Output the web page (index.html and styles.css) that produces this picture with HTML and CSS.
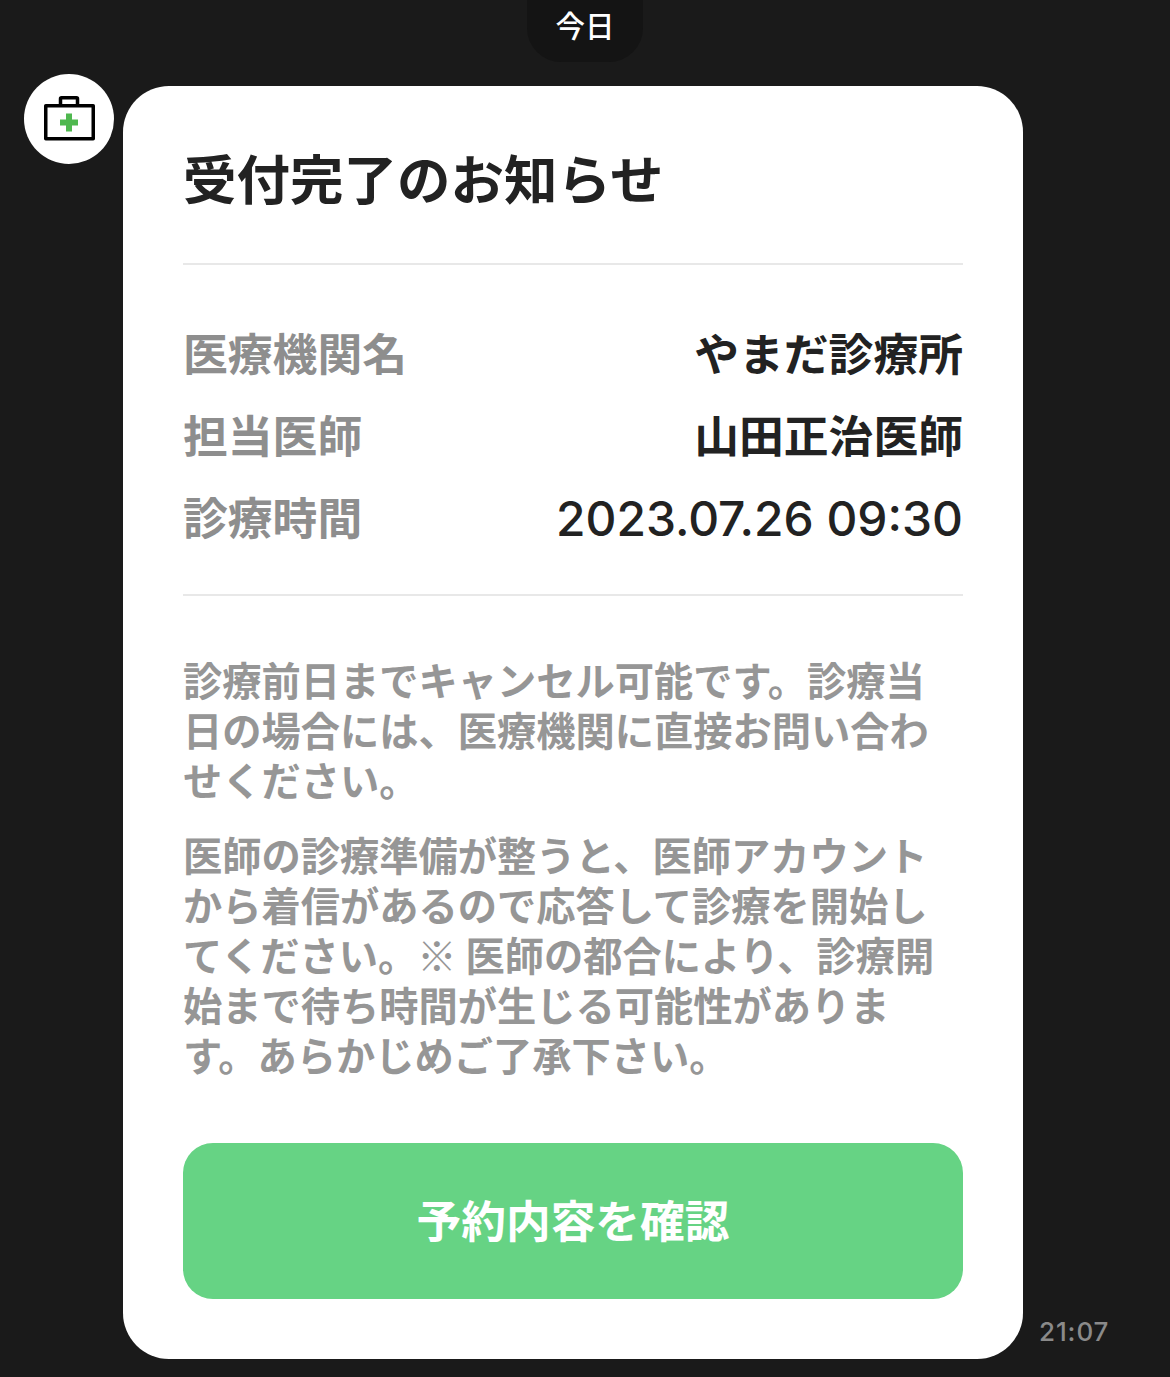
FILE: index.html
```html
<!DOCTYPE html>
<html lang="ja">

<head>
    <meta charset="UTF-8">
    <meta name="viewport" content="width=device-width, initial-scale=1.0">
    <title>受付完了のお知らせ</title>
    <link rel="stylesheet" href="styles.css">
</head>

<body>
    <div class="date-row">
        <div class="date-pill">今日</div>
    </div>
    <div class="message">
        <div class="avatar">
            <svg class="avatar-icon" viewBox="0 0 52 45" width="52" height="45" aria-hidden="true">
                <path d="M17.5 9V2.8a1 1 0 0 1 1-1h15a1 1 0 0 1 1 1V9" fill="none" stroke="#000" stroke-width="3.5"/>
                <rect x="2.75" y="9.75" width="47.5" height="33" fill="#fff" stroke="#000" stroke-width="3.5" stroke-linejoin="round"/>
                <path d="M23 17.5h6v6h6v6h-6v6h-6v-6h-6v-6h6z" fill="#4fb84f"/>
            </svg>
        </div>
        <div class="card">
            <h2>受付完了のお知らせ</h2>
            <hr>
            <dl class="details">
                <div class="row">
                    <dt>医療機関名</dt>
                    <dd>やまだ診療所</dd>
                </div>
                <div class="row">
                    <dt>担当医師</dt>
                    <dd>山田正治医師</dd>
                </div>
                <div class="row">
                    <dt>診療時間</dt>
                    <dd class="latin">2023.07.26 09:30</dd>
                </div>
            </dl>
            <hr>
            <p class="note first">診療前日までキャンセル可能です。診療当<br>日の場合には、医療機関に直接お問い合わ<br>せください。</p>
            <p class="note">医師の診療準備が整うと、医師アカウント<br>から着信があるので応答して診療を開始し<br>てください。※ 医師の都合により、診療開<br>始まで待ち時間が生じる可能性がありま<br>す。あらかじめご了承下さい。</p>
            <a class="button">予約内容を確認</a>
        </div>
        <div class="time">21:07</div>
    </div>
</body>

</html>
```

FILE: styles.css
```css
html {
    font-family: "Noto Sans CJK JP", "Noto Sans", sans-serif;
}

body {
    background-color: #1a1a1a;
    height: 1377px;
    margin: 0;
    overflow: hidden;
}

.date-row {
    display: flex;
    height: 86px;
    justify-content: center;
}

.date-pill {
    background-color: #141414;
    border-radius: 0 0 34px 34px;
    color: #ffffff;
    font-size: 29.5px;
    font-weight: 500;
    height: 62px;
    line-height: 48px;
    text-align: center;
    width: 116px;
}

.message {
    align-items: flex-end;
    display: flex;
    padding-left: 24px;
    position: relative;
}

.avatar {
    align-items: center;
    align-self: flex-start;
    background-color: #ffffff;
    border-radius: 50%;
    display: flex;
    flex: none;
    height: 90px;
    justify-content: center;
    margin-right: 9px;
    margin-top: -12px;
    width: 90px;
}

.avatar-icon {
    margin-bottom: 2px;
}

.card {
    background-color: #ffffff;
    border-radius: 46px;
    box-sizing: border-box;
    height: 1273px;
    padding: 61px 60px 60px;
    width: 900px;
}

h2 {
    color: #222222;
    font-size: 53.5px;
    font-weight: 700;
    line-height: 60px;
    margin: 0 0 56px;
}

hr {
    background-color: #e8e8e8;
    border: 0;
    height: 2px;
    margin: 0;
}

.details {
    margin: 46px 0 37px;
}

.row {
    display: flex;
    font-size: 44.8px;
    height: 82px;
    justify-content: space-between;
    line-height: 82px;
}

dt {
    color: #8e8e8e;
    font-weight: 700;
}

dd {
    color: #222222;
    font-weight: 700;
    margin: 0;
}

dd.latin {
    font-family: Inter, "Noto Sans", sans-serif;
    font-size: 47.9px;
    font-weight: 500;
    line-height: 88px;
}

.note {
    color: #969696;
    font-size: 39.25px;
    font-weight: 700;
    line-height: 50px;
    margin: 25px 0 0;
    white-space: nowrap;
}

.note.first {
    margin-top: 58px;
}

.button {
    align-items: center;
    background-color: #66d384;
    border-radius: 30px;
    box-sizing: border-box;
    color: #ffffff;
    display: flex;
    font-size: 44.7px;
    font-weight: 700;
    height: 156px;
    justify-content: center;
    margin-top: 64px;
    padding-bottom: 6px;
}

.time {
    color: #8a8a8a;
    font-family: Inter, "Noto Sans", sans-serif;
    font-size: 26px;
    font-weight: 500;
    letter-spacing: 0.9px;
    line-height: 32px;
    margin-bottom: 11px;
    margin-left: 16px;
}
```
